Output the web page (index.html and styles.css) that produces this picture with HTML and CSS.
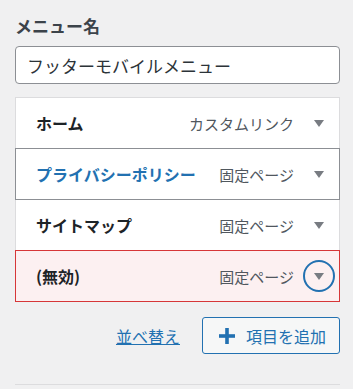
FILE: index.html
```html
<!DOCTYPE html>
<html lang="ja">

<head>
    <meta charset="UTF-8">
    <meta name="viewport" content="width=device-width, initial-scale=1.0">
    <title>メニュー</title>
    <link rel="stylesheet" href="styles.css">
</head>

<body>
    <div class="menu-panel">
        <label class="menu-name-label" for="menuName">メニュー名</label>
        <input type="text" id="menuName" class="menu-name-input" value="フッターモバイルメニュー">

        <ul class="menu-items">
            <li class="menu-item">
                <span class="item-title">ホーム</span>
                <span class="item-type">カスタムリンク</span>
                <button type="button" class="item-toggle"><span class="arrow"></span></button>
            </li>
            <li class="menu-item hovered">
                <span class="item-title">プライバシーポリシー</span>
                <span class="item-type">固定ページ</span>
                <button type="button" class="item-toggle"><span class="arrow"></span></button>
            </li>
            <li class="menu-item">
                <span class="item-title">サイトマップ</span>
                <span class="item-type">固定ページ</span>
                <button type="button" class="item-toggle"><span class="arrow"></span></button>
            </li>
            <li class="menu-item invalid">
                <span class="item-title">(無効)</span>
                <span class="item-type">固定ページ</span>
                <button type="button" class="item-toggle focused"><span class="arrow"></span></button>
            </li>
        </ul>

        <div class="menu-actions">
            <a href="#" class="reorder-link">並べ替え</a>
            <button type="button" class="add-item">
                <svg width="16" height="16" viewBox="0 0 16 16">
                    <rect x="6.2" y="0" width="3.6" height="16" fill="#2271b1" />
                    <rect x="0" y="6.2" width="16" height="3.6" fill="#2271b1" />
                </svg>
                <span>項目を追加</span>
            </button>
        </div>

        <div class="divider"></div>
    </div>
</body>

</html>
```

FILE: styles.css
```css
body {
    font-family: "Noto Sans CJK JP", "Noto Sans", sans-serif;
    margin: 0;
    padding: 0;
    background-color: #f0f0f1;
    color: #1d2327;
}

.menu-panel {
    width: 325px;
    padding: 14px 13px 0 15px;
}

.menu-name-label {
    display: block;
    font-size: 17px;
    font-weight: bold;
    line-height: 24px;
    color: #3c434a;
    margin-bottom: 8px;
}

.menu-name-input {
    display: block;
    box-sizing: border-box;
    width: 100%;
    height: 38px;
    margin: 0 0 13px;
    padding: 0 11px;
    border: 1px solid #8c8f94;
    border-radius: 4px;
    background-color: #fff;
    font-family: inherit;
    font-size: 17px;
    color: #2c3338;
}

.menu-items {
    list-style: none;
    margin: 0;
    padding: 0;
}

.menu-item {
    position: relative;
    display: flex;
    align-items: center;
    box-sizing: border-box;
    height: 52px;
    margin-top: -1px;
    padding: 0 4px 0 20px;
    border: 1px solid #dcdcde;
    background-color: #fff;
}

.menu-item:first-child {
    margin-top: 0;
}

.menu-item.hovered {
    z-index: 1;
    border-color: #8c8f94;
}

.menu-item.hovered .item-title {
    color: #2271b1;
}

.menu-item.invalid {
    z-index: 1;
    border-color: #d63638;
    background-color: #fcf0f1;
}

.item-title {
    flex: 1;
    font-size: 16px;
    font-weight: bold;
}

.item-type {
    font-size: 15px;
    color: #50575e;
    margin-right: 9px;
}

.item-toggle {
    display: flex;
    align-items: center;
    justify-content: center;
    box-sizing: border-box;
    width: 32px;
    height: 32px;
    padding: 0;
    border: 2px solid transparent;
    border-radius: 50%;
    background: none;
}

.item-toggle.focused {
    border-color: #2271b1;
}

.arrow {
    width: 0;
    height: 0;
    margin-top: 1px;
    border-left: 5px solid transparent;
    border-right: 5px solid transparent;
    border-top: 7px solid #787c82;
}

.menu-actions {
    display: flex;
    justify-content: flex-end;
    align-items: center;
    margin-top: 15px;
}

.reorder-link {
    font-size: 16px;
    color: #2271b1;
    margin-right: 22px;
}

.add-item {
    display: flex;
    align-items: center;
    box-sizing: border-box;
    width: 138px;
    height: 37px;
    padding: 0 0 0 16px;
    border: 1px solid #2271b1;
    border-radius: 3px;
    background-color: #f6f7f7;
    font-family: inherit;
    font-size: 16px;
    color: #2271b1;
}

.add-item svg {
    margin-right: 11px;
}

.divider {
    height: 1px;
    margin-top: 30px;
    background-color: #dcdcde;
}
```
